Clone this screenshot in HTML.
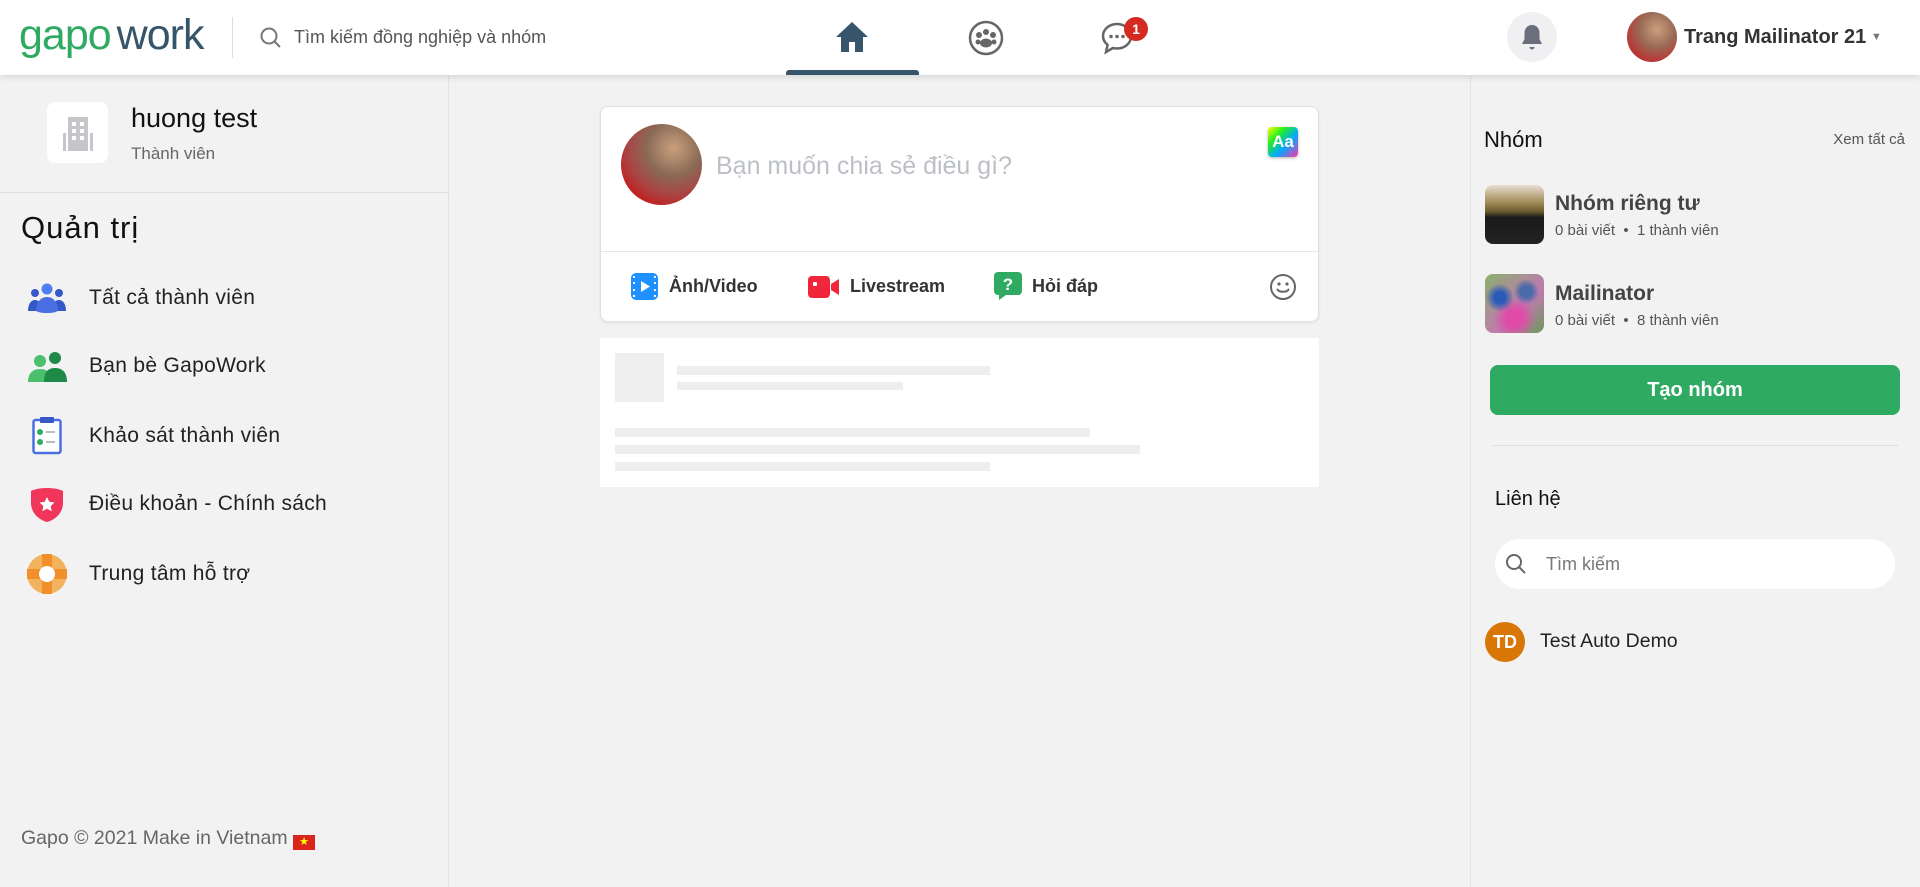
<!DOCTYPE html>
<html><head><meta charset="utf-8"><style>
*{box-sizing:border-box;margin:0;padding:0}
body{width:1920px;height:887px;overflow:hidden;background:#f2f2f2;font-family:"Liberation Sans",sans-serif;color:#222;position:relative}
.a{position:absolute}
.hdr{left:0;top:0;width:1920px;height:75px;background:#fff;box-shadow:0 2px 6px rgba(0,0,0,.12);z-index:2}
.t{position:absolute;white-space:nowrap}
.sk{position:absolute;background:#eeeeee}
</style></head><body>
<div class="a hdr">
 <div class="t" style="left:19px;top:11px;font-size:43px;letter-spacing:-1px"><span style="color:#2eaa62">gapo</span><span style="color:#36556b;margin-left:6px">work</span></div>
 <div class="a" style="left:232px;top:17px;width:1px;height:41px;background:#ddd"></div>
 <svg class="a" style="left:259px;top:26px" width="24" height="24" viewBox="0 0 24 24"><circle cx="10" cy="10" r="7.5" fill="none" stroke="#777" stroke-width="2"/><path d="M15.5 15.5L21 21" stroke="#777" stroke-width="2"/></svg>
 <div class="t" style="left:294px;top:27px;font-size:18px;color:#555">Tìm kiếm đồng nghiệp và nhóm</div>
 <svg class="a" style="left:834px;top:20px" width="36" height="34" viewBox="0 0 36 34"><path d="M18 2L2 17h5v15h8v-10h6v10h8V17h5z" fill="#36556b"/></svg>
 <div class="a" style="left:786px;top:70px;width:133px;height:5px;background:#36556b;border-radius:3px 3px 0 0"></div>
 <svg class="a" style="left:968px;top:20px" width="36" height="36" viewBox="0 0 36 36"><circle cx="18" cy="18" r="16" fill="none" stroke="#666" stroke-width="2.5"/><circle cx="11" cy="15" r="3" fill="#666"/><circle cx="18" cy="12" r="3" fill="#666"/><circle cx="25" cy="15" r="3" fill="#666"/><ellipse cx="18" cy="23" rx="6" ry="4.5" fill="#666"/><circle cx="10" cy="22" r="2.5" fill="#666"/><circle cx="26" cy="22" r="2.5" fill="#666"/></svg>
 <svg class="a" style="left:1100px;top:21px" width="34" height="34" viewBox="0 0 34 34"><path d="M17 3C9 3 3 8.5 3 15c0 3.5 1.8 6.6 4.6 8.8L6 31l7-4c1.3.3 2.6.5 4 .5 8 0 14-5.5 14-12S25 3 17 3z" fill="none" stroke="#666" stroke-width="2.5"/><circle cx="11" cy="15.5" r="1.8" fill="#666"/><circle cx="17" cy="15.5" r="1.8" fill="#666"/><circle cx="23" cy="15.5" r="1.8" fill="#666"/></svg>
 <div class="a" style="left:1124px;top:17px;width:24px;height:24px;border-radius:50%;background:#d42a20;color:#fff;font-size:14px;font-weight:bold;text-align:center;line-height:24px">1</div>
 <div class="a" style="left:1507px;top:12px;width:50px;height:50px;border-radius:50%;background:#f0f0f2"></div>
 <svg class="a" style="left:1519px;top:23px" width="26" height="28" viewBox="0 0 26 28"><path d="M13 2c-5 0-7.5 4-7.5 8v6L3 21h20l-2.5-5v-6c0-4-2.5-8-7.5-8z" fill="#6b6e7c"/><path d="M10.5 24a2.5 2.5 0 005 0z" fill="#6b6e7c"/></svg>
 <div class="a" style="left:1627px;top:12px;width:50px;height:50px;border-radius:50%;background:radial-gradient(circle at 60% 35%,#c9a07e,#9a6a55 40%,#b33 75%,#c22)"></div>
 <div class="t" style="left:1684px;top:26px;font-size:20px;font-weight:bold;color:#333">Trang Mailinator 21</div>
 <div class="t" style="left:1871px;top:31px;font-size:11px;color:#777">▼</div>
</div>

<!-- left -->
<div class="a" style="left:0;top:75px;width:449px;height:812px;border-right:1px solid #e2e2e2"></div>
<div class="a" style="left:47px;top:102px;width:61px;height:61px;background:#fff;border-radius:8px"></div>
<svg class="a" style="left:62px;top:115px" width="32" height="36" viewBox="0 0 32 36"><rect x="6" y="2" width="20" height="34" fill="#c5c6ca"/><rect x="1" y="18" width="3" height="18" fill="#c5c6ca"/><rect x="28" y="18" width="3" height="18" fill="#c5c6ca"/><g fill="#fff"><rect x="10" y="7" width="4" height="4"/><rect x="18" y="7" width="4" height="4"/><rect x="10" y="14" width="4" height="4"/><rect x="18" y="14" width="4" height="4"/><rect x="10" y="21" width="4" height="4"/><rect x="18" y="21" width="4" height="4"/></g></svg>
<div class="t" style="left:131px;top:103px;font-size:27px;color:#111">huong test</div>
<div class="t" style="left:131px;top:144px;font-size:17px;color:#666">Thành viên</div>
<div class="a" style="left:0;top:192px;width:449px;height:1px;background:#ddd"></div>
<div class="t" style="left:21px;top:210px;font-size:31px;color:#111;letter-spacing:1px">Quản trị</div>

<svg class="a" style="left:27px;top:283px" width="40" height="30" viewBox="0 0 40 30"><circle cx="20" cy="6" r="5.5" fill="#4f7ef0"/><circle cx="8" cy="10" r="4" fill="#3558c6"/><circle cx="32" cy="10" r="4" fill="#3558c6"/><path d="M1 28c0-7 3-11 7-11s6 3 6 11z" fill="#3558c6"/><path d="M39 28c0-7-3-11-7-11s-6 3-6 11z" fill="#3558c6"/><path d="M9 27c0-8 5-13 11-13s11 5 11 13c0 2-5 3-11 3S9 29 9 27z" fill="#4a6fe3"/></svg>
<div class="t" style="left:89px;top:286px;font-size:21px;color:#222;letter-spacing:.3px">Tất cả thành viên</div>
<svg class="a" style="left:28px;top:350px" width="39" height="32" viewBox="0 0 39 32"><circle cx="12" cy="11" r="6" fill="#4cbf6d"/><path d="M0 32c0-9 5-13 12-13s12 4 12 13z" fill="#4cbf6d"/><circle cx="27" cy="8" r="6" fill="#1f8a47"/><path d="M16 32c0-10 4-14 11-14s12 4 12 14z" fill="#1f8a47"/></svg>
<div class="t" style="left:89px;top:354px;font-size:21px;color:#222;letter-spacing:.3px">Bạn bè GapoWork</div>
<svg class="a" style="left:32px;top:417px" width="30" height="38" viewBox="0 0 30 38"><rect x="1.5" y="3" width="27" height="33" rx="2" fill="#fff" stroke="#4a6fe3" stroke-width="2.5"/><rect x="8" y="0" width="14" height="6" rx="1" fill="#3558c6"/><circle cx="8" cy="15" r="3" fill="#2eaa62"/><circle cx="8" cy="25" r="3" fill="#2eaa62"/><rect x="14" y="14" width="9" height="2" fill="#bbb"/><rect x="14" y="24" width="9" height="2" fill="#bbb"/></svg>
<div class="t" style="left:89px;top:424px;font-size:21px;color:#222;letter-spacing:.3px">Khảo sát thành viên</div>
<svg class="a" style="left:29px;top:487px" width="36" height="36" viewBox="0 0 36 36"><path d="M18 1C12 1 6 2 2 4v12c0 10 8 17 16 19 8-2 16-9 16-19V4c-4-2-10-3-16-3z" fill="#f0365a"/><path d="M18 10l2.3 4.8 5.2.7-3.8 3.6 1 5.2-4.7-2.5-4.7 2.5 1-5.2-3.8-3.6 5.2-.7z" fill="#fff"/></svg>
<div class="t" style="left:89px;top:492px;font-size:21px;color:#222;letter-spacing:.3px">Điều khoản - Chính sách</div>
<svg class="a" style="left:27px;top:554px" width="40" height="40" viewBox="0 0 40 40"><circle cx="20" cy="20" r="20" fill="#f3b25e"/><rect x="15" y="0" width="10" height="40" fill="#f18f2b"/><rect x="0" y="15" width="40" height="10" fill="#f18f2b"/><circle cx="20" cy="20" r="8" fill="#fff"/></svg>
<div class="t" style="left:89px;top:562px;font-size:21px;color:#222;letter-spacing:.3px">Trung tâm hỗ trợ</div>
<div class="t" style="left:21px;top:827px;font-size:19.5px;color:#666">Gapo © 2021 Make in Vietnam <span style="display:inline-block;width:22px;height:15px;background:#da251d;color:#ff0;font-size:11px;line-height:15px;text-align:center;vertical-align:-1px">★</span></div>

<!-- center card -->
<div class="a" style="left:600px;top:106px;width:719px;height:216px;background:#fff;border:1px solid #e0e0e0;border-radius:8px;box-shadow:0 1px 3px rgba(0,0,0,.08)"></div>
<div class="a" style="left:621px;top:124px;width:81px;height:81px;border-radius:50%;background:radial-gradient(circle at 65% 30%,#c9a07e,#8a6a55 35%,#a44 60%,#c11 85%)"></div>
<div class="t" style="left:716px;top:152px;font-size:25px;color:#bcc0c6">Bạn muốn chia sẻ điều gì?</div>
<div class="a" style="left:1268px;top:127px;width:30px;height:30px;border-radius:4px;background:linear-gradient(135deg,#ff0 0%,#2e2 30%,#0af 60%,#f3a 100%);box-shadow:0 1px 3px rgba(0,0,0,.3);color:#fff;font-weight:bold;font-size:17px;text-align:center;line-height:30px">Aa</div>
<div class="a" style="left:601px;top:251px;width:717px;height:1px;background:#e6e6e6"></div>
<svg class="a" style="left:631px;top:273px" width="27" height="27" viewBox="0 0 27 27"><rect width="27" height="27" rx="5" fill="#1e90ff"/><g fill="#fff"><rect x="2" y="3" width="2" height="2"/><rect x="2" y="9" width="2" height="2"/><rect x="2" y="16" width="2" height="2"/><rect x="2" y="22" width="2" height="2"/><rect x="23" y="3" width="2" height="2"/><rect x="23" y="9" width="2" height="2"/><rect x="23" y="16" width="2" height="2"/><rect x="23" y="22" width="2" height="2"/><path d="M10 8l9 5.5-9 5.5z"/></g></svg>
<div class="t" style="left:669px;top:276px;font-size:18px;font-weight:bold;color:#333">Ảnh/Video</div>
<svg class="a" style="left:808px;top:275px" width="32" height="24" viewBox="0 0 32 24"><rect x="0" y="1" width="22" height="22" rx="4" fill="#f1263a"/><path d="M23 9l8-5v16l-8-5z" fill="#f1263a"/><rect x="5" y="7" width="4" height="4" rx="1" fill="#fff"/></svg>
<div class="t" style="left:850px;top:276px;font-size:18px;font-weight:bold;color:#333">Livestream</div>
<svg class="a" style="left:994px;top:272px" width="28" height="28" viewBox="0 0 28 28"><path d="M4 0h20a4 4 0 014 4v15a4 4 0 01-4 4H12l-7 5v-5H4a4 4 0 01-4-4V4a4 4 0 014-4z" fill="#2eaa62"/><text x="14" y="18" font-size="17" font-weight="bold" fill="#fff" text-anchor="middle" font-family="Liberation Sans">?</text></svg>
<div class="t" style="left:1032px;top:276px;font-size:18px;font-weight:bold;color:#333">Hỏi đáp</div>
<svg class="a" style="left:1269px;top:273px" width="28" height="28" viewBox="0 0 28 28"><circle cx="14" cy="14" r="12" fill="none" stroke="#666" stroke-width="2"/><circle cx="10" cy="11" r="1.6" fill="#666"/><circle cx="18" cy="11" r="1.6" fill="#666"/><path d="M8.5 16.5c1.5 3 9.5 3 11 0" fill="none" stroke="#666" stroke-width="2" stroke-linecap="round"/></svg>

<div class="a" style="left:600px;top:338px;width:719px;height:149px;background:#fff"></div>
<div class="sk" style="left:615px;top:353px;width:49px;height:49px"></div>
<div class="sk" style="left:677px;top:366px;width:313px;height:9px"></div>
<div class="sk" style="left:677px;top:382px;width:226px;height:8px"></div>
<div class="sk" style="left:615px;top:428px;width:475px;height:9px"></div>
<div class="sk" style="left:615px;top:445px;width:525px;height:9px"></div>
<div class="sk" style="left:615px;top:462px;width:375px;height:9px"></div>

<!-- right -->
<div class="a" style="left:1470px;top:75px;width:1px;height:812px;background:#e2e2e2"></div>
<div class="t" style="left:1484px;top:127px;font-size:22px;color:#111">Nhóm</div>
<div class="t" style="right:15px;top:131px;font-size:15px;color:#555">Xem tất cả</div>
<div class="a" style="left:1485px;top:185px;width:59px;height:59px;border-radius:8px;background:linear-gradient(#e8ddd0 0%,#a08a55 30%,#6a5a30 45%,#1a1a1a 55%,#222 100%)"></div>
<div class="t" style="left:1555px;top:192px;font-size:21px;font-weight:bold;color:#444">Nhóm riêng tư</div>
<div class="t" style="left:1555px;top:222px;font-size:15px;color:#555">0 bài viết &nbsp;•&nbsp; 1 thành viên</div>
<div class="a" style="left:1485px;top:274px;width:59px;height:59px;border-radius:8px;background:radial-gradient(circle at 25% 40%,#2b5ab8 10%,transparent 25%),radial-gradient(circle at 70% 30%,#4a6aa8 10%,transparent 22%),radial-gradient(circle at 50% 75%,#e04aa8 15%,transparent 40%),linear-gradient(135deg,#8ab06a,#c07ab0 60%,#6a9a5a)"></div>
<div class="t" style="left:1555px;top:282px;font-size:21px;font-weight:bold;color:#444">Mailinator</div>
<div class="t" style="left:1555px;top:312px;font-size:15px;color:#555">0 bài viết &nbsp;•&nbsp; 8 thành viên</div>
<div class="a" style="left:1490px;top:365px;width:410px;height:50px;border-radius:8px;background:#2eaa62;color:#fff;font-size:20px;font-weight:bold;text-align:center;line-height:50px">Tạo nhóm</div>
<div class="a" style="left:1493px;top:445px;width:405px;height:1px;background:#ddd"></div>
<div class="t" style="left:1495px;top:488px;font-size:20px;color:#111">Liên hệ</div>
<div class="a" style="left:1495px;top:539px;width:400px;height:50px;border-radius:25px;background:#fff"></div>
<svg class="a" style="left:1505px;top:553px" width="22" height="22" viewBox="0 0 22 22"><circle cx="9" cy="9" r="7" fill="none" stroke="#666" stroke-width="2"/><path d="M14 14l6 6" stroke="#666" stroke-width="2"/></svg>
<div class="t" style="left:1546px;top:554px;font-size:18px;color:#777">Tìm kiếm</div>
<div class="a" style="left:1485px;top:622px;width:40px;height:40px;border-radius:50%;background:#d97706;color:#fff;font-weight:bold;font-size:18px;text-align:center;line-height:40px">TD</div>
<div class="t" style="left:1540px;top:630px;font-size:19.5px;color:#222">Test Auto Demo</div>
</body></html>
